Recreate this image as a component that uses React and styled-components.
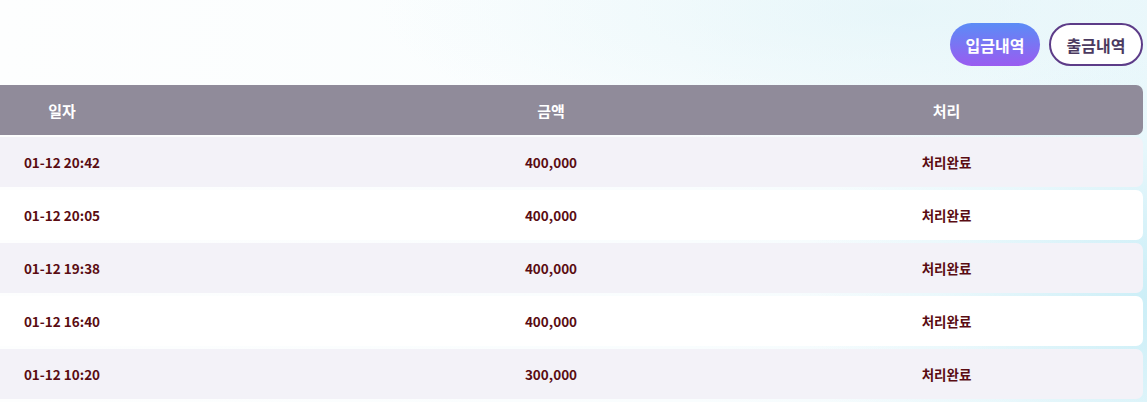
import styled, { createGlobalStyle } from "styled-components";

const GlobalStyle = createGlobalStyle`
  html, body {
    margin: 0;
    padding: 0;
  }
  body {
    font-family: "Noto Sans CJK KR", "Noto Sans", sans-serif;
    background: #ffffff;
  }
`;

const Page = styled.div`
  width: 1147px;
  height: 402px;
  overflow: hidden;
  box-sizing: border-box;
  padding: 23px 4px 0 0;
  background:
    radial-gradient(ellipse 380px 260px at 1180px 300px, rgba(196, 236, 246, 0.9), rgba(220, 244, 250, 0.4) 60%, rgba(255, 255, 255, 0) 100%),
    radial-gradient(ellipse 520px 140px at 900px 10px, rgba(226, 244, 248, 0.7), rgba(255, 255, 255, 0) 100%),
    linear-gradient(90deg, #fdfefe 0%, #f9fdfe 60%, #eef9fc 100%);
`;

const Tabs = styled.div`
  display: flex;
  justify-content: flex-end;
  gap: 9px;
  margin-bottom: 19px;
`;

const Tab = styled.button`
  height: 43px;
  padding: 0 ${(p) => (p.active ? "12px" : "10px")};
  min-width: ${(p) => (p.active ? "90px" : "94px")};
  box-sizing: border-box;
  border-radius: 22px;
  font-family: "Noto Sans CJK KR", sans-serif;
  font-size: 16px;
  font-weight: 700;
  cursor: pointer;
  color: ${(p) => (p.active ? "#ffffff" : "#4b3a60")};
  background: ${(p) =>
    p.active ? "linear-gradient(180deg, #5b8cf6 0%, #9a5cf0 100%)" : "#ffffff"};
  border: ${(p) => (p.active ? "none" : "2px solid #5d3c88")};
`;

const Table = styled.div`
  display: flex;
  flex-direction: column;
  gap: 3px;
`;

const Row = styled.div`
  display: grid;
  grid-template-columns: 124px 626px 1fr;
  height: 50px;
  align-items: center;
  border-radius: 0 7px 7px 0;
  background: ${(p) => (p.head ? "#908b9a" : p.alt ? "#ffffff" : "#f3f2f8")};
  margin-bottom: ${(p) => (p.head ? "-1px" : "0")};
`;

const Cell = styled.div`
  text-align: center;
  padding-left: ${(p) => (p.pad ? "228px" : "0")};
  font-family: "Noto Sans CJK KR", sans-serif;
  font-size: ${(p) => (p.head ? "15px" : "13.5px")};
  font-weight: 700;
  color: ${(p) => (p.head ? "#ffffff" : "#5a0c12")};
`;

const rows = [
  { date: "01-12 20:42", amount: "400,000" },
  { date: "01-12 20:05", amount: "400,000" },
  { date: "01-12 19:38", amount: "400,000" },
  { date: "01-12 16:40", amount: "400,000" },
  { date: "01-12 10:20", amount: "300,000" },
];

export default function App() {
  return (
    <>
      <GlobalStyle />
      <Page>
        <Tabs>
          <Tab active>입금내역</Tab>
          <Tab>출금내역</Tab>
        </Tabs>
        <Table>
          <Row head>
            <Cell head>일자</Cell>
            <Cell head pad>금액</Cell>
            <Cell head>처리</Cell>
          </Row>
          {rows.map((r, i) => (
            <Row key={i} alt={i % 2 === 1}>
              <Cell>{r.date}</Cell>
              <Cell pad>{r.amount}</Cell>
              <Cell>처리완료</Cell>
            </Row>
          ))}
        </Table>
      </Page>
    </>
  );
}
